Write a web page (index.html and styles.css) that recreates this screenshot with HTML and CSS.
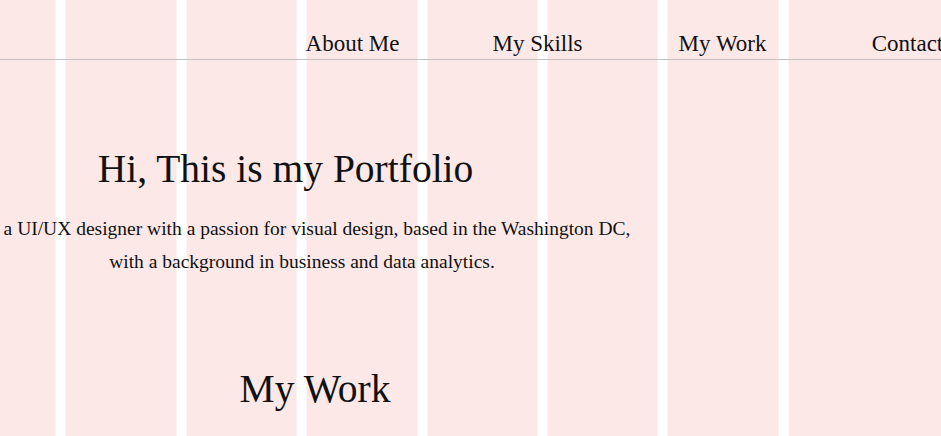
FILE: index.html
```html
<!DOCTYPE html>
<html lang="en">
<head>
<meta charset="utf-8">
<title>Portfolio</title>
<link rel="stylesheet" href="styles.css">
</head>
<body>
<nav class="nav">
  <a class="nav-link" href="#about">About Me</a>
  <a class="nav-link" href="#skills">My Skills</a>
  <a class="nav-link" href="#work">My Work</a>
  <a class="nav-link" href="#contact">Contact</a>
</nav>
<main class="main">
  <section class="hero">
    <h1 class="hero-title">Hi, This is my Portfolio</h1>
    <p class="hero-text">I'm a UI/UX designer with a passion for visual design, based in the Washington DC,<br>with a background in business and data analytics.</p>
  </section>
  <section class="work" id="work">
    <h2 class="work-title">My Work</h2>
  </section>
</main>
</body>
</html>
```
FILE: styles.css
```css
html, body {
  margin: 0;
  padding: 0;
}

body {
  width: 941px;
  height: 436px;
  overflow: hidden;
  font-family: "Liberation Serif", "Times New Roman", serif;
  color: #111;
  background-color: #fff;
  background-image: repeating-linear-gradient(90deg, #fde8e8 0, #fde8e8 110.4px, #fff 110.4px, #fff 120.4px);
  background-position: -54.4px 0;
}

.nav {
  display: flex;
  padding: 31px 0 2px 260px;
  border-bottom: 1px solid #c2c2c2;
}

.nav-link {
  flex: 0 0 185px;
  text-align: center;
  font-size: 23px;
  line-height: 26px;
  color: inherit;
  text-decoration: none;
  white-space: nowrap;
}

.hero-title {
  margin: 87px 0 0;
  width: 571px;
  text-align: center;
  font-size: 39.5px;
  font-weight: 400;
  line-height: 44px;
}

.hero-text {
  margin: 21px 0 0 -48px;
  width: 700px;
  text-align: center;
  font-size: 19.5px;
  line-height: 33px;
  white-space: nowrap;
}

.work-title {
  margin: 89px 0 0;
  width: 630px;
  text-align: center;
  font-size: 39.5px;
  font-weight: 400;
  line-height: 44px;
}
```
